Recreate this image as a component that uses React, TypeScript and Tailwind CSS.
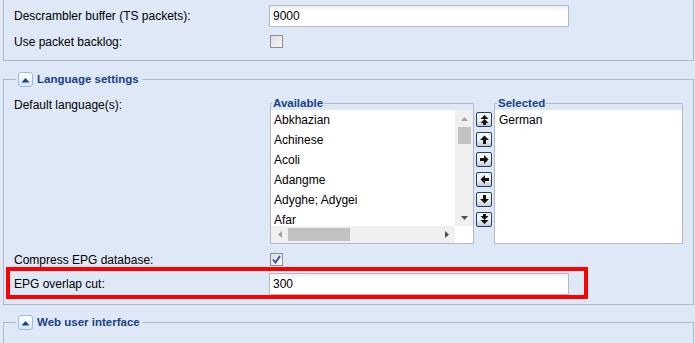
import React from 'react';

const available = ['Abkhazian', 'Achinese', 'Acoli', 'Adangme', 'Adyghe; Adygei', 'Afar'];

const CollapseTool: React.FC = () => (
  <span className="flex h-[15px] w-[15px] items-center justify-center rounded-[3px] border border-[#99bbe8] bg-gradient-to-b from-white to-[#dbe6f5]">
    <svg width="9" height="6" viewBox="0 0 9 6">
      <path d="M0.5 5.5 L4.5 1 L8.5 5.5 Z" fill="#15428b" />
    </svg>
  </span>
);

const Legend: React.FC<{ title: string }> = ({ title }) => (
  <legend className="ml-[2px] flex items-center px-[2px] pr-[3px]">
    <CollapseTool />
    <span className="ml-[4px] text-[11.5px] font-bold leading-[15px] text-[#15428b]">{title}</span>
  </legend>
);

const TextInput: React.FC<{ value: string }> = ({ value }) => (
  <div className="h-[22px] w-[300px] border border-[#b5b8c8] bg-gradient-to-b from-[#eeeeee] via-white via-[25%] to-white pl-[3px] leading-[20px]">
    {value}
  </div>
);

const Checkbox: React.FC<{ checked?: boolean }> = ({ checked }) => (
  <span className="ml-[1px] flex h-[13px] w-[13px] items-center justify-center border border-[#8e8f8f] bg-gradient-to-br from-[#dcdcdc] to-[#f8f8f8]">
    {checked && (
      <svg width="9" height="9" viewBox="0 0 9 9">
        <path d="M1 4.5 L3.5 7.5 L8 1" fill="none" stroke="#2a4f9a" strokeWidth="1.8" />
      </svg>
    )}
  </span>
);

const arrowPaths: Record<string, React.ReactNode> = {
  top: (
    <>
      <path d="M1.5 5 L5.5 1 L9.5 5 Z" fill="#111" />
      <path d="M1.5 9 L5.5 5 L9.5 9 Z" fill="#111" />
      <rect x="4" y="8" width="3" height="3" fill="#111" />
    </>
  ),
  up: (
    <>
      <path d="M1 6 L5.5 1.5 L10 6 Z" fill="#111" />
      <rect x="4" y="6" width="3" height="4" fill="#111" />
    </>
  ),
  right: (
    <>
      <path d="M5 1 L9.5 5.5 L5 10 Z" fill="#111" />
      <rect x="1" y="4" width="4" height="3" fill="#111" />
    </>
  ),
  left: (
    <>
      <path d="M6 1 L1.5 5.5 L6 10 Z" fill="#111" />
      <rect x="6" y="4" width="4" height="3" fill="#111" />
    </>
  ),
  down: (
    <>
      <path d="M1 5 L5.5 9.5 L10 5 Z" fill="#111" />
      <rect x="4" y="1" width="3" height="4" fill="#111" />
    </>
  ),
  bottom: (
    <>
      <rect x="4" y="0" width="3" height="3" fill="#111" />
      <path d="M1.5 2 L5.5 6 L9.5 2 Z" fill="#111" />
      <path d="M1.5 6 L5.5 10 L9.5 6 Z" fill="#111" />
    </>
  ),
};

const MoveButton: React.FC<{ kind: string }> = ({ kind }) => (
  <span className="flex h-[15px] w-[16px] items-center justify-center rounded-[2px] border border-[#1c3f73] bg-gradient-to-b from-white via-[#f2f2f2] via-[55%] to-[#c6c9ce]">
    <svg width="11" height="11" viewBox="0 0 11 11">
      {arrowPaths[kind]}
    </svg>
  </span>
);

const SmallTri: React.FC<{ dir: 'up' | 'down' | 'left' | 'right'; color: string }> = ({ dir, color }) => {
  const d = {
    up: 'M0 4 L3.5 0 L7 4 Z',
    down: 'M0 0 L3.5 4 L7 0 Z',
    left: 'M4 0 L0 3.5 L4 7 Z',
    right: 'M0 0 L4 3.5 L0 7 Z',
  }[dir];
  const vertical = dir === 'up' || dir === 'down';
  return (
    <svg width={vertical ? 7 : 4} height={vertical ? 4 : 7} viewBox={vertical ? '0 0 7 4' : '0 0 4 7'}>
      <path d={d} fill={color} />
    </svg>
  );
};

const App: React.FC = () => {
  return (
    <div className="relative h-[343px] w-[695px] overflow-hidden bg-[#dfe8f6] font-['Liberation_Sans',Arial,sans-serif] text-[12px] text-black">
      {/* general settings (top cut off) */}
      <div className="ml-[3px] h-[61px] w-[691px] border-x border-b border-[#b5b8c8] px-[10px] pt-[5px]">
        <div className="flex h-[22px] items-center">
          <span className="w-[255px]">Descrambler buffer (TS packets):</span>
          <TextInput value="9000" />
        </div>
        <div className="mt-[8px] flex h-[13px] items-center">
          <span className="w-[255px]">Use packet backlog:</span>
          <Checkbox />
        </div>
      </div>

      {/* language settings */}
      <fieldset className="ml-[3px] mt-[11px] h-[233px] w-[691px] border border-[#b5b8c8] px-[10px] pt-[10px]">
        <Legend title="Language settings" />
        <div className="flex">
          <span className="w-[255px] pt-[1px] leading-[14px]">Default language(s):</span>

          <fieldset className="ml-[1px] h-[147px] w-[204px] border border-[#b5b8c8]">
            <legend className="ml-[1px] px-[1px] text-[11.5px] font-bold leading-[13px] text-[#15428b]">Available</legend>
            <div className="flex h-[133px] flex-col">
              <div className="flex h-[116px]">
                <div className="h-full w-[184px] overflow-hidden bg-white">
                  {available.map(name => (
                    <div key={name} className="h-[20px] pl-[3px] leading-[20px]">{name}</div>
                  ))}
                </div>
                <div className="flex h-full w-[18px] flex-col items-center bg-[#f0f0f0]">
                  <div className="flex h-[17px] items-center justify-center"><SmallTri dir="up" color="#a3a3a3" /></div>
                  <div className="h-[17px] w-[13px] bg-[#c1c1c1]" />
                  <div className="flex-1" />
                  <div className="flex h-[17px] items-center justify-center"><SmallTri dir="down" color="#505050" /></div>
                </div>
              </div>
              <div className="flex h-[17px]">
                <div className="flex h-full w-[184px] items-center bg-[#f0f0f0]">
                  <div className="flex w-[17px] justify-center"><SmallTri dir="left" color="#a3a3a3" /></div>
                  <div className="h-[13px] w-[62px] bg-[#c1c1c1]" />
                  <div className="flex-1" />
                  <div className="flex w-[17px] justify-center"><SmallTri dir="right" color="#505050" /></div>
                </div>
                <div className="h-full w-[18px] bg-white" />
              </div>
            </div>
          </fieldset>

          <div className="ml-[2px] mt-[15px] flex flex-col gap-[5px]">
            {['top', 'up', 'right', 'left', 'down', 'bottom'].map(k => (
              <MoveButton key={k} kind={k} />
            ))}
          </div>

          <fieldset className="ml-[2px] h-[147px] w-[189px] border border-[#b5b8c8]">
            <legend className="ml-[2px] px-[1px] text-[11.5px] font-bold leading-[13px] text-[#15428b]">Selected</legend>
            <div className="h-[133px] bg-white pl-[4px]">
              <div className="h-[20px] leading-[20px]">German</div>
            </div>
          </fieldset>
        </div>

        <div className="mt-[9px] flex h-[13px] items-center">
          <span className="w-[255px]">Compress EPG database:</span>
          <Checkbox checked />
        </div>
        <div className="relative mt-[7px] flex h-[22px] items-center">
          <span className="w-[255px]">EPG overlap cut:</span>
          <TextInput value="300" />
          <div className="pointer-events-none absolute left-[-8px] top-[-6px] h-[32px] w-[582px] border-4 border-[#ff0000]" />
        </div>
      </fieldset>

      {/* web user interface */}
      <fieldset className="ml-[3px] mt-[10px] h-[60px] w-[691px] border border-[#b5b8c8] px-[10px]">
        <Legend title="Web user interface" />
      </fieldset>
    </div>
  );
};

export default App;
